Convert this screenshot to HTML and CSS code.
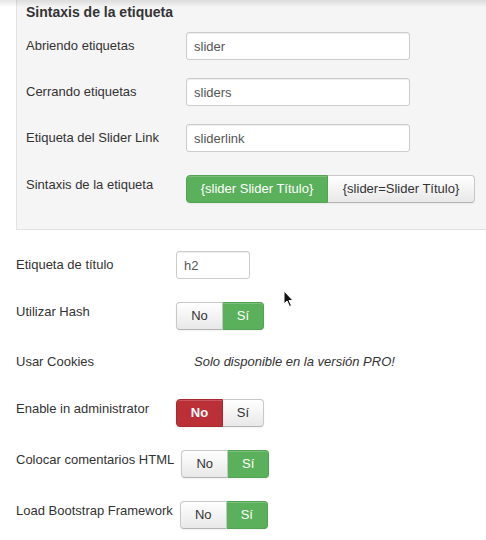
FILE: index.html
```html
<!DOCTYPE html>
<html lang="es">
<head>
  <meta charset="UTF-8">
  <meta name="viewport" content="width=device-width, initial-scale=1.0">
  <title>Opciones del slider</title>
  <link rel="stylesheet" href="styles.css">
</head>
<body>
  <div class="toolbar-shadow"></div>

  <div class="well">
    <h4 class="well-title">Sintaxis de la etiqueta</h4>

    <div class="control-group">
      <label class="control-label">Abriendo etiquetas</label>
      <input type="text" class="text-input" value="slider">
    </div>

    <div class="control-group">
      <label class="control-label">Cerrando etiquetas</label>
      <input type="text" class="text-input" value="sliders">
    </div>

    <div class="control-group">
      <label class="control-label">Etiqueta del Slider Link</label>
      <input type="text" class="text-input" value="sliderlink">
    </div>

    <div class="control-group radio-group">
      <label class="control-label">Sintaxis de la etiqueta</label>
      <div class="btn-group">
        <button class="btn btn-success">{slider Slider Título}</button>
        <button class="btn">{slider=Slider Título}</button>
      </div>
    </div>
  </div>

  <div class="control-group">
    <label class="control-label">Etiqueta de título</label>
    <input type="text" class="text-input small" value="h2">
  </div>

  <div class="control-group radio-group">
    <label class="control-label">Utilizar Hash</label>
    <div class="btn-group">
      <button class="btn toggle">No</button>
      <button class="btn toggle btn-success">Sí</button>
    </div>
  </div>

  <div class="control-group">
    <label class="control-label">Usar Cookies</label>
    <p class="pro-note">Solo disponible en la versión PRO!</p>
  </div>

  <div class="control-group radio-group">
    <label class="control-label">Enable in administrator</label>
    <div class="btn-group">
      <button class="btn toggle btn-danger">No</button>
      <button class="btn toggle">Sí</button>
    </div>
  </div>

  <div class="control-group radio-group">
    <label class="control-label">Colocar comentarios HTML</label>
    <div class="btn-group">
      <button class="btn toggle">No</button>
      <button class="btn toggle btn-success">Sí</button>
    </div>
  </div>

  <div class="control-group radio-group">
    <label class="control-label">Load Bootstrap Framework</label>
    <div class="btn-group">
      <button class="btn toggle">No</button>
      <button class="btn toggle btn-success">Sí</button>
    </div>
  </div>

  <!-- mouse pointer -->
  <svg class="cursor" width="12" height="18" viewBox="0 0 12 18">
    <path d="M1 1 L1 14 L4 11 L6.5 16.5 L8.5 15.5 L6 10.5 L10 10.5 Z" fill="#111" stroke="#fff" stroke-width="1"/>
  </svg>
</body>
</html>
```

FILE: styles.css
```css
body {
  font-family: "Liberation Sans", Arial, sans-serif;
  font-size: 13px;
  line-height: 18px;
  color: #333;
  background-color: #fff;
  margin: 0;
  padding: 0 0 0 16px;
  overflow: hidden;
}

.toolbar-shadow {
  position: fixed;
  top: 0;
  left: 0;
  right: 0;
  height: 7px;
  background: linear-gradient(to bottom, rgba(0, 0, 0, 0.1), rgba(0, 0, 0, 0));
}

.well {
  background-color: #f5f5f5;
  border: 1px solid #e3e3e3;
  border-top: none;
  border-right: none;
  padding: 3px 0 8px 9px;
  margin-bottom: 21px;
}

.well-title {
  font-size: 14px;
  font-weight: bold;
  line-height: 18px;
  margin: 0 0 11px;
  color: #333;
}

.control-group {
  display: flex;
  align-items: flex-start;
  margin-bottom: 18px;
}

.control-label {
  min-width: 153px;
  margin-right: 7px;
  padding-top: 5px;
  white-space: nowrap;
}

.text-input {
  box-sizing: border-box;
  width: 224px;
  height: 28px;
  padding: 4px 7px;
  font-family: inherit;
  font-size: 13px;
  color: #555;
  background-color: #fff;
  border: 1px solid #ccc;
  border-radius: 3px;
  box-shadow: inset 0 1px 1px rgba(0, 0, 0, 0.075);
  outline: none;
}

.text-input.small {
  width: 74px;
}

.radio-group .btn-group {
  margin-top: 5px;
}

.radio-group .control-label {
  padding-top: 6px;
}

.btn-group {
  display: flex;
}

.btn {
  box-sizing: border-box;
  height: 28px;
  padding: 4px 14px;
  font-family: inherit;
  font-size: 13px;
  line-height: 18px;
  color: #333;
  background: linear-gradient(to bottom, #fff, #e8e8e8);
  border: 1px solid #c8c8c8;
  border-bottom-color: #b3b3b3;
  box-shadow: inset 0 1px 0 rgba(255, 255, 255, 0.2), 0 1px 2px rgba(0, 0, 0, 0.05);
}

.btn:first-child {
  border-radius: 4px 0 0 4px;
}

.btn:last-child {
  border-radius: 0 4px 4px 0;
  border-left: none;
}

.btn.toggle {
  width: 47px;
  padding: 4px 0;
  text-align: center;
}

.btn.toggle:last-child {
  width: 41px;
}

.btn-success {
  color: #fff;
  background: #5bb05b;
  border-color: #52a452;
}

.btn-danger {
  color: #fff;
  font-weight: bold;
  background: #bb2f36;
  border-color: #a9282f;
}

.well .btn:first-child {
  width: 142px;
  padding: 4px 0;
}

.well .btn:last-child {
  width: 147px;
  padding: 4px 0;
}

.pro-note {
  margin: 0;
  padding: 5px 0 5px 18px;
  font-style: italic;
}

.cursor {
  position: absolute;
  left: 283px;
  top: 290px;
}
```
